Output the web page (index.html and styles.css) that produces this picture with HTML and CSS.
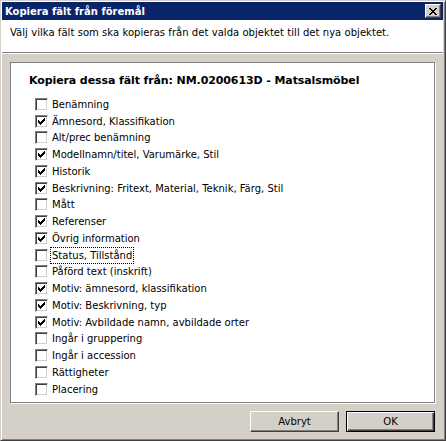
FILE: index.html
```html
<!DOCTYPE html>
<html lang="sv">
<head>
<meta charset="utf-8">
<title>Kopiera fält från föremål</title>
<link rel="stylesheet" href="styles.css">
</head>
<body>
<div class="window">
  <div class="titlebar">
    <span class="title">Kopiera fält från föremål</span>
    <span class="close"><svg width="8" height="7" viewBox="0 0 8 7" shape-rendering="crispEdges"><path d="M0 0h2v1h-2zM6 0h2v1h-2zM1 1h2v1h-2zM5 1h2v1h-2zM2 2h4v1h-4zM3 3h2v1h-2zM2 4h4v1h-4zM1 5h2v1h-2zM5 5h2v1h-2zM0 6h2v1h-2zM6 6h2v1h-2z" fill="#000"/></svg></span>
  </div>
  <div class="header">Välj vilka fält som ska kopieras från det valda objektet till det nya objektet.</div>
  <div class="body">
    <div class="listbox">
      <div class="list-title">Kopiera dessa fält från: NM.0200613D - Matsalsmöbel</div>
      <ul class="items">
        <li class="item"><span class="cb"></span><span class="label">Benämning</span></li>
        <li class="item"><span class="cb"><svg class="check" width="7" height="7" viewBox="0 0 7 7" shape-rendering="crispEdges"><path d="M6 0h1v1h-1zM5 1h2v1h-2zM0 2h1v1h-1zM4 2h3v1h-3zM0 3h2v1h-2zM3 3h3v1h-3zM0 4h5v1h-5zM1 5h3v1h-3zM2 6h1v1h-1z" fill="#000"/></svg></span><span class="label">Ämnesord, Klassifikation</span></li>
        <li class="item"><span class="cb"></span><span class="label">Alt/prec benämning</span></li>
        <li class="item"><span class="cb"><svg class="check" width="7" height="7" viewBox="0 0 7 7" shape-rendering="crispEdges"><path d="M6 0h1v1h-1zM5 1h2v1h-2zM0 2h1v1h-1zM4 2h3v1h-3zM0 3h2v1h-2zM3 3h3v1h-3zM0 4h5v1h-5zM1 5h3v1h-3zM2 6h1v1h-1z" fill="#000"/></svg></span><span class="label">Modellnamn/titel, Varumärke, Stil</span></li>
        <li class="item"><span class="cb"><svg class="check" width="7" height="7" viewBox="0 0 7 7" shape-rendering="crispEdges"><path d="M6 0h1v1h-1zM5 1h2v1h-2zM0 2h1v1h-1zM4 2h3v1h-3zM0 3h2v1h-2zM3 3h3v1h-3zM0 4h5v1h-5zM1 5h3v1h-3zM2 6h1v1h-1z" fill="#000"/></svg></span><span class="label">Historik</span></li>
        <li class="item"><span class="cb"><svg class="check" width="7" height="7" viewBox="0 0 7 7" shape-rendering="crispEdges"><path d="M6 0h1v1h-1zM5 1h2v1h-2zM0 2h1v1h-1zM4 2h3v1h-3zM0 3h2v1h-2zM3 3h3v1h-3zM0 4h5v1h-5zM1 5h3v1h-3zM2 6h1v1h-1z" fill="#000"/></svg></span><span class="label">Beskrivning: Fritext, Material, Teknik, Färg, Stil</span></li>
        <li class="item"><span class="cb"></span><span class="label">Mått</span></li>
        <li class="item"><span class="cb"><svg class="check" width="7" height="7" viewBox="0 0 7 7" shape-rendering="crispEdges"><path d="M6 0h1v1h-1zM5 1h2v1h-2zM0 2h1v1h-1zM4 2h3v1h-3zM0 3h2v1h-2zM3 3h3v1h-3zM0 4h5v1h-5zM1 5h3v1h-3zM2 6h1v1h-1z" fill="#000"/></svg></span><span class="label">Referenser</span></li>
        <li class="item"><span class="cb"><svg class="check" width="7" height="7" viewBox="0 0 7 7" shape-rendering="crispEdges"><path d="M6 0h1v1h-1zM5 1h2v1h-2zM0 2h1v1h-1zM4 2h3v1h-3zM0 3h2v1h-2zM3 3h3v1h-3zM0 4h5v1h-5zM1 5h3v1h-3zM2 6h1v1h-1z" fill="#000"/></svg></span><span class="label">Övrig information</span></li>
        <li class="item"><span class="cb"></span><span class="label focus">Status, Tillstånd</span></li>
        <li class="item"><span class="cb"></span><span class="label">Påförd text (inskrift)</span></li>
        <li class="item"><span class="cb"><svg class="check" width="7" height="7" viewBox="0 0 7 7" shape-rendering="crispEdges"><path d="M6 0h1v1h-1zM5 1h2v1h-2zM0 2h1v1h-1zM4 2h3v1h-3zM0 3h2v1h-2zM3 3h3v1h-3zM0 4h5v1h-5zM1 5h3v1h-3zM2 6h1v1h-1z" fill="#000"/></svg></span><span class="label">Motiv: ämnesord, klassifikation</span></li>
        <li class="item"><span class="cb"><svg class="check" width="7" height="7" viewBox="0 0 7 7" shape-rendering="crispEdges"><path d="M6 0h1v1h-1zM5 1h2v1h-2zM0 2h1v1h-1zM4 2h3v1h-3zM0 3h2v1h-2zM3 3h3v1h-3zM0 4h5v1h-5zM1 5h3v1h-3zM2 6h1v1h-1z" fill="#000"/></svg></span><span class="label">Motiv: Beskrivning, typ</span></li>
        <li class="item"><span class="cb"><svg class="check" width="7" height="7" viewBox="0 0 7 7" shape-rendering="crispEdges"><path d="M6 0h1v1h-1zM5 1h2v1h-2zM0 2h1v1h-1zM4 2h3v1h-3zM0 3h2v1h-2zM3 3h3v1h-3zM0 4h5v1h-5zM1 5h3v1h-3zM2 6h1v1h-1z" fill="#000"/></svg></span><span class="label">Motiv: Avbildade namn, avbildade orter</span></li>
        <li class="item"><span class="cb"></span><span class="label">Ingår i gruppering</span></li>
        <li class="item"><span class="cb"></span><span class="label">Ingår i accession</span></li>
        <li class="item"><span class="cb"></span><span class="label">Rättigheter</span></li>
        <li class="item"><span class="cb"></span><span class="label">Placering</span></li>
      </ul>
    </div>
    <div class="buttons">
      <button class="btn">Avbryt</button>
      <button class="btn btn-default">OK</button>
    </div>
  </div>
</div>
</body>
</html>
```

FILE: styles.css
```css
html, body {
  margin: 0;
  padding: 0;
  background: #d4d0c8;
}
body {
  font-family: "DejaVu Sans", Verdana, sans-serif;
  font-size: 10px;
  color: #000;
}
.window {
  width: 446px;
  height: 441px;
  box-sizing: border-box;
  display: flex;
  flex-direction: column;
  background: #d4d0c8;
  border: 1px solid;
  border-color: #d4d0c8 #404040 #404040 #d4d0c8;
  box-shadow: inset 1px 1px 0 #fff, inset -1px -1px 0 #808080;
  padding: 1px 2px 1px 1px;
}
.titlebar {
  height: 18px;
  flex: none;
  background: #0a246a;
  color: #fff;
  display: flex;
  align-items: center;
  justify-content: space-between;
  padding-left: 3px;
}
.title {
  font-weight: bold;
  font-size: 10px;
  line-height: 13px;
}
.close {
  width: 16px;
  height: 14px;
  box-sizing: border-box;
  margin-right: 2px;
  background: #d4d0c8;
  border: 1px solid;
  border-color: #fff #404040 #404040 #fff;
  box-shadow: inset -1px -1px 0 #808080;
  display: flex;
  align-items: center;
  justify-content: center;
}
.close svg {
  display: block;
  margin-left: -1px;
}
.header {
  flex: none;
  height: 33px;
  box-sizing: border-box;
  background: #fff;
  padding: 6px 8px 0;
  line-height: 13px;
  letter-spacing: 0.05px;
  border-bottom: 1px solid #808080;
}
.body {
  flex: 1;
  display: flex;
  flex-direction: column;
  border-top: 1px solid #fff;
  padding: 8px 8px 0;
}
.listbox {
  height: 341px;
  box-sizing: border-box;
  background: #fff;
  border: 1px solid #808080;
  box-shadow: 1px 1px 0 #fff;
  padding: 10px 0 0 18px;
}
.list-title {
  font-weight: bold;
  font-size: 11px;
  line-height: 15px;
  letter-spacing: -0.1px;
}
.items {
  list-style: none;
  margin: 8px 0 0;
  padding: 0 0 0 6px;
}
.item {
  height: 16.75px;
  display: flex;
  align-items: center;
  gap: 4px;
}
.cb {
  width: 13px;
  height: 13px;
  box-sizing: border-box;
  flex: none;
  background: #fff;
  border: 1px solid;
  border-color: #808080 #fff #fff #808080;
  box-shadow: inset 1px 1px 0 #404040, inset -1px -1px 0 #d4d0c8;
  position: relative;
}
.check {
  position: absolute;
  left: 2px;
  top: 2px;
  display: block;
}
.label {
  line-height: 13px;
  white-space: nowrap;
}
.focus {
  outline: 1px dotted #000;
  outline-offset: 1px;
}
.buttons {
  margin-top: 8px;
  display: flex;
  justify-content: flex-end;
  gap: 7px;
}
.btn {
  width: 89px;
  height: 21px;
  box-sizing: border-box;
  margin: 0;
  padding: 0;
  font-family: "DejaVu Sans", Verdana, sans-serif;
  font-size: 10px;
  color: #000;
  background: #d4d0c8;
  border: 1px solid;
  border-color: #fff #404040 #404040 #fff;
  box-shadow: inset -1px -1px 0 #808080;
}
.btn-default {
  border-color: #000;
  box-shadow: inset 1px 1px 0 #fff, inset -1px -1px 0 #404040, inset -2px -2px 0 #808080;
}
```
